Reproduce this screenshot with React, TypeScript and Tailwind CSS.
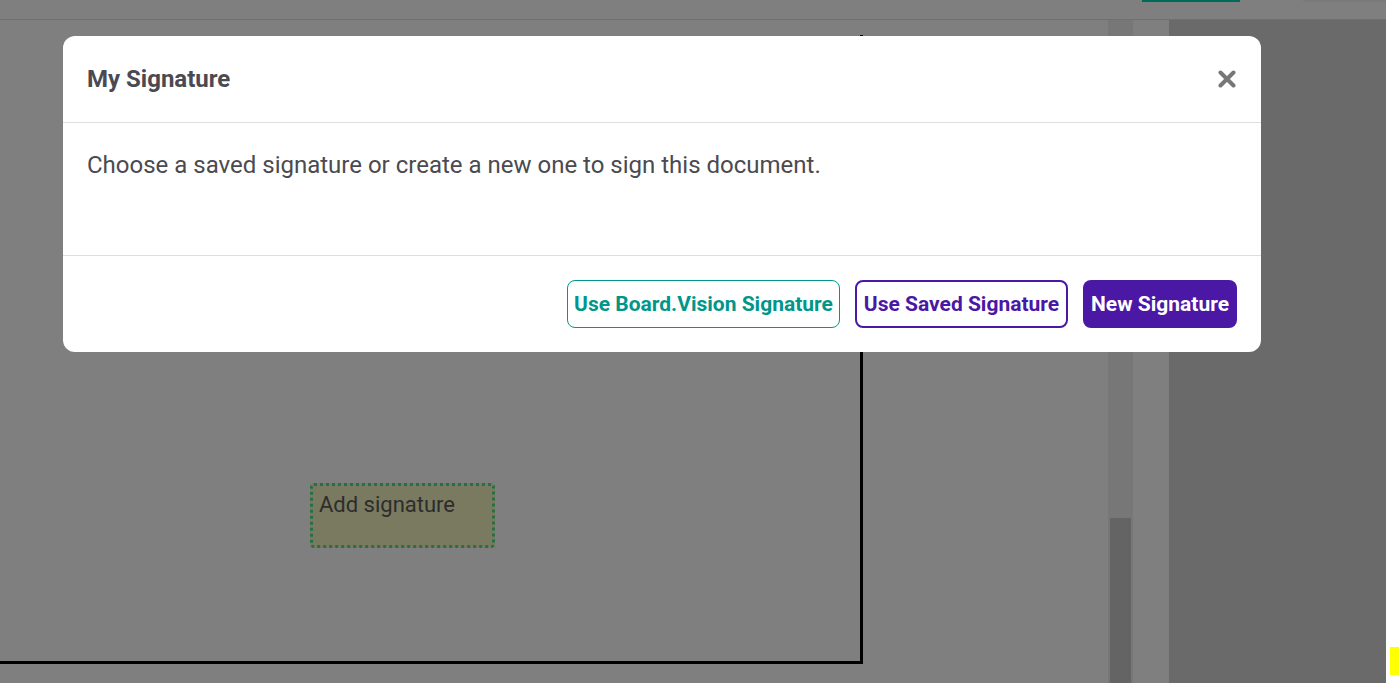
import React from 'react'

export default function App() {
  return (
    <div className="flex h-[683px] w-[1400px] overflow-hidden bg-white font-['Roboto',sans-serif]">
      <div className="relative flex w-[1386px] flex-col">
        {/* top bar */}
        <div className="flex h-[20px] shrink-0 items-start justify-end gap-[63px] border-b border-[#e0e0e0]">
          <div className="h-[2px] w-[98px] bg-[#00d4b4]"></div>
          <div className="h-[2px] w-[83px] bg-[#f4f4f4]"></div>
        </div>

        <div className="flex flex-1">
          <div className="w-[1108px] shrink-0">
            <div className="relative -ml-[20px] mt-[15px] h-[629px] w-[883px] border-b-[3px] border-r-[3px] border-black">
              <div className="absolute left-[330px] top-[448px] flex h-[65px] w-[185px] items-start rounded-[4px] border-[3px] border-dotted border-[#50dc8c] bg-[#f4f4c0] px-[6px] pt-[6px] text-[22px] leading-[26px] text-[#5a5a5a]">
                Add signature
              </div>
            </div>
          </div>
          <div className="flex w-[25px] shrink-0 flex-col bg-[#eeeeee] px-[2px] pt-[498px]">
            <div className="flex-1 bg-[#c8c8c8]"></div>
          </div>
          <div className="w-[36px] shrink-0"></div>
          <div className="w-[217px] shrink-0 bg-[#d4d4d4]"></div>
        </div>

        {/* dim overlay */}
        <div className="absolute inset-0 bg-black/50"></div>

        {/* modal */}
        <div className="absolute left-[63px] top-[36px] flex w-[1198px] flex-col rounded-[12px] bg-white">
          <div className="flex h-[87px] items-center justify-between border-b border-[#dedede] px-6">
            <h2 className="text-[24px] font-bold leading-[30px] text-[#4a4a53]">My Signature</h2>
            <button type="button" className="flex h-[20px] w-[20px] items-center justify-center text-[#777777]">
              <svg width="18" height="18" viewBox="0 0 18 18">
                <path d="M2.5 2.5 L15.5 15.5 M15.5 2.5 L2.5 15.5" stroke="currentColor" strokeWidth="4" strokeLinecap="round" />
              </svg>
            </button>
          </div>
          <div className="h-[132px] px-6 pt-[26px]">
            <p className="text-[24px] leading-[32px] text-[#4a4a4f]">
              Choose a saved signature or create a new one to sign this document.
            </p>
          </div>
          <div className="flex items-center justify-end gap-[15px] border-t border-[#dedede] px-6 pb-6 pt-6">
            <button type="button" className="h-[48px] w-[273px] rounded-[8px] border border-[#00968a] pt-[2px] text-[21px] font-bold text-[#00968a]">
              Use Board.Vision Signature
            </button>
            <button type="button" className="h-[48px] w-[213px] rounded-[8px] border-2 border-[#4b17a5] pt-[2px] text-[21px] font-bold text-[#4b17a5]">
              Use Saved Signature
            </button>
            <button type="button" className="h-[48px] w-[154px] rounded-[8px] bg-[#4b17a5] pt-[2px] text-[21px] font-bold text-white">
              New Signature
            </button>
          </div>
        </div>
      </div>

      {/* page scrollbar strip */}
      <div className="flex w-[14px] shrink-0 flex-col bg-white pl-[4px] pt-[647px]">
        <div className="h-[28px] w-[9px] bg-[#ffff00]"></div>
      </div>
    </div>
  )
}
